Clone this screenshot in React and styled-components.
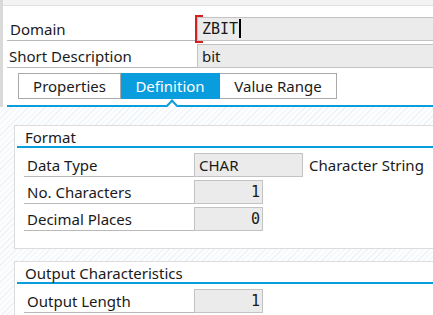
import React from 'react';
import styled, { createGlobalStyle } from 'styled-components';

const GlobalStyle = createGlobalStyle`
  html, body { margin: 0; padding: 0; background: #fff; overflow: hidden; }
  body { font-family: "Noto Sans", "Open Sans", sans-serif; font-size: 15px; color: #1a1a1a; }
`;

const Screen = styled.div`
  display: flex;
  width: 433px;
  height: 315px;
  overflow: hidden;
`;

const SideBar = styled.div`
  width: 3px;
  flex: none;
  background: #d9d9d9;
`;

const Main = styled.div`
  flex: 1;
  display: flex;
  flex-direction: column;
  min-width: 0;
`;

const TopStrip = styled.div`
  height: 5px;
  flex: none;
  background: #f3f3f3;
  border-bottom: 1px solid #e0e0e0;
`;

const Header = styled.div`
  padding: 11px 0 0 4px;
  display: flex;
  flex-direction: column;
  gap: 3px;
  background: #fff;
`;

const Row = styled.div`
  display: grid;
  grid-template-columns: ${p => p.$label}px auto 1fr;
  align-items: center;
  height: 24px;
`;

const Label = styled.div`
  height: 24px;
  line-height: 25px;
  padding-left: ${p => p.$indent || 3}px;
  border-bottom: 1px solid #b9b9b9;
  box-sizing: border-box;
  white-space: nowrap;
`;

const Field = styled.div`
  position: relative;
  box-sizing: border-box;
  height: 24px;
  width: ${p => (p.$w ? `${p.$w}px` : 'auto')};
  background: #ebebeb;
  border: 1px solid #c3c3c3;
  padding: 0 ${p => (p.$right ? 2 : 4)}px 0 4px;
  line-height: 23px;
  text-align: ${p => (p.$right ? 'right' : 'left')};
  font-family: ${p => (p.$mono ? '"DejaVu Sans Mono", "Liberation Mono", monospace' : 'inherit')};
  font-size: 15px;
  white-space: nowrap;
`;

const Caret = styled.span`
  display: inline-block;
  width: 2px;
  height: 19px;
  background: #000;
  vertical-align: -4px;
  margin-left: 1px;
`;

const FocusMark = styled.span`
  position: absolute;
  left: -3px;
  top: -3px;
  bottom: -3px;
  width: 6px;
  border: 2px solid #d42020;
  border-right: none;
`;

const Note = styled.div`
  padding-left: 6px;
  white-space: nowrap;
`;

const TabBar = styled.div`
  display: flex;
  margin: 2px 0 0 11px;
  height: 26px;
`;

const Tab = styled.div`
  box-sizing: border-box;
  width: ${p => p.$w}px;
  height: 26px;
  line-height: 25px;
  text-align: center;
  border: 1px solid ${p => (p.$active ? '#0a9ddd' : '#a9a9a9')};
  border-left-width: ${p => (p.$first ? 1 : 0)}px;
  background: ${p => (p.$active ? '#0a9ddd' : '#fff')};
  color: ${p => (p.$active ? '#fff' : '#1a1a1a')};
`;

const TabLine = styled.div`
  position: relative;
  margin-top: 3px;
  height: 2px;
  background: #0a9ddd;
  &::after {
    content: '';
    position: absolute;
    left: 161px;
    top: -4px;
    width: 6px;
    height: 6px;
    background: #fff;
    border-top: 2px solid #0a9ddd;
    border-left: 2px solid #0a9ddd;
    transform: rotate(45deg);
  }
`;

const Body = styled.div`
  flex: 1;
  margin-left: -4px;
  padding: 18px 0 0 15px;
  display: flex;
  flex-direction: column;
  gap: 12px;
  background: repeating-linear-gradient(
    -45deg,
    #fcfdfe 0px,
    #fcfdfe 3px,
    #f0f3f6 3px,
    #f0f3f6 4px
  );
`;

const Group = styled.div`
  background: #fff;
  border: 1px solid #dcdcdc;
  border-right: none;
  padding: 0 0 ${p => p.$pad}px 1px;
`;

const GroupTitle = styled.div`
  height: 20px;
  line-height: 22px;
  padding-left: 8px;
  border-bottom: 2px solid #0a9ddd;
  margin-left: 1px;
`;

const GroupRows = styled.div`
  padding: 5px 0 0 8px;
  display: flex;
  flex-direction: column;
  gap: 3px;
`;

export default function App() {
  return (
    <>
      <GlobalStyle />
      <Screen>
        <SideBar />
        <Main>
          <TopStrip />
          <Header>
            <Row $label={190}>
              <Label>Domain</Label>
              <Field $mono style={{ width: 240 }}>
                <FocusMark />
                ZBIT<Caret />
              </Field>
            </Row>
            <Row $label={190}>
              <Label $indent={2}>Short Description</Label>
              <Field style={{ width: 240 }}>bit</Field>
            </Row>
            <TabBar>
              <Tab $w={103} $first>Properties</Tab>
              <Tab $w={99} $active>Definition</Tab>
              <Tab $w={117}>Value Range</Tab>
            </TabBar>
            <TabLine />
          </Header>
          <Body>
            <Group $pad={17}>
              <GroupTitle>Format</GroupTitle>
              <GroupRows>
                <Row $label={170}>
                  <Label>Data Type</Label>
                  <Field $w={109}>CHAR</Field>
                  <Note>Character String</Note>
                </Row>
                <Row $label={170}>
                  <Label>No. Characters</Label>
                  <Field $w={69} $mono $right>1</Field>
                </Row>
                <Row $label={170}>
                  <Label>Decimal Places</Label>
                  <Field $w={69} $mono $right>0</Field>
                </Row>
              </GroupRows>
            </Group>
            <Group $pad={17}>
              <GroupTitle>Output Characteristics</GroupTitle>
              <GroupRows>
                <Row $label={170}>
                  <Label>Output Length</Label>
                  <Field $w={69} $mono $right>1</Field>
                </Row>
                <Row $label={170}>
                  <Label />
                  <Field $w={59} />
                </Row>
              </GroupRows>
            </Group>
          </Body>
        </Main>
      </Screen>
    </>
  );
}
